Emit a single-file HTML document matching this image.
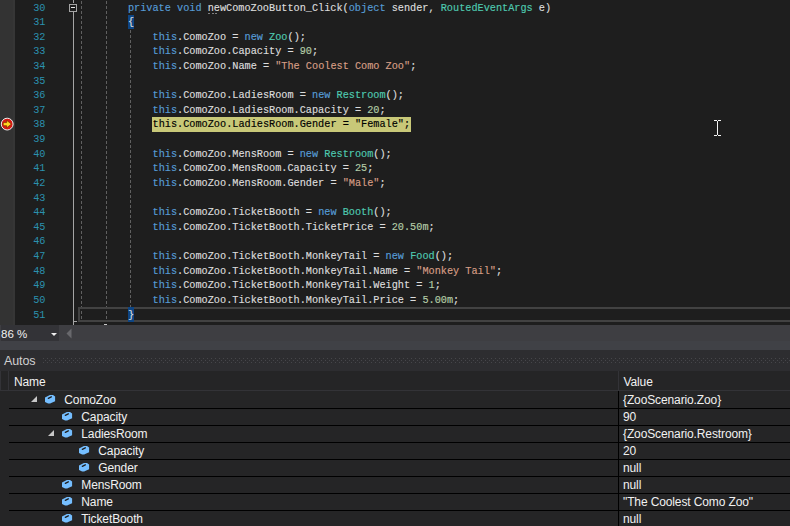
<!DOCTYPE html>
<html><head><meta charset="utf-8">
<style>
*{margin:0;padding:0;box-sizing:border-box}
html,body{width:790px;height:526px;overflow:hidden;background:#1e1e1e}
body{position:relative;font-family:"Liberation Sans",sans-serif}
.abs{position:absolute}
#editor{left:0;top:0;width:790px;height:325px;background:#1e1e1e;overflow:hidden}
#ind{left:0;top:0;width:15px;height:325px;background:#333333}
.ln{position:absolute;left:14.5px;width:31px;text-align:right;font-family:"Liberation Mono",monospace;font-size:10.23px;color:#2b91af;height:14.62px;line-height:14.62px;white-space:pre}
.cl{position:absolute;left:0;-webkit-text-stroke:0.15px currentColor;font-family:"Liberation Mono",monospace;font-size:10.23px;color:#dcdcdc;height:14.62px;line-height:14.62px;white-space:pre}
.k{color:#569cd6}.t{color:#4ec9b0}.s{color:#d69d85}.n{color:#b5cea8}
.cur{color:#000}
.box{position:absolute}
#bar{left:0;top:325px;width:790px;height:25px;background:#3e3e42}
#zoom{left:1px;top:325px;width:58px;height:16px;background:#333337;color:#f0f0f0;font-size:11.5px;line-height:18px;padding-left:0;white-space:pre}
#title{left:0;top:350px;width:790px;height:21px;background:#2d2d30}
#hdr{left:0;top:371px;width:790px;height:20px;background:#252526;border-bottom:1px solid #333337}
#rows{left:0;top:391px;width:790px;height:135px;background:#252526}
.sep{position:absolute;left:9px;width:781px;height:1px;background:#0f0f0f}
.rt{position:absolute;color:#f1f1f1;font-size:12px;line-height:17px;height:17px;white-space:pre;letter-spacing:-0.12px}
</style></head><body>
<div id="editor" class="abs">
  <div id="ind" class="abs"></div>
  <div class="abs" style="left:13px;top:0;width:2px;height:325px;background:#363636"></div>
  <div class="box" style="left:152px;top:116.96px;width:259px;height:14.62px;background:#c8c878"></div>
  <svg class="abs" style="left:0;top:0" width="790" height="325">
    <circle cx="7.2" cy="124.1" r="5.9" fill="#d81a14" stroke="#eeeeee" stroke-width="1"/>
    <path d="M3.2 122.6H6.6V120.3L11.4 124.1L6.6 127.9V125.7H3.2Z" fill="#ffd820" stroke="#6a1000" stroke-width="0.6"/>
    <rect x="73" y="0" width="1" height="3" fill="#a5a5a5"/>
    <rect x="73" y="12" width="1" height="313" fill="#a5a5a5"/>
    <rect x="73" y="321" width="4" height="1" fill="#a5a5a5"/>
    <rect x="69.5" y="4.5" width="7" height="7" fill="#1e1e1e" stroke="#a5a5a5" stroke-width="1"/>
    <rect x="71" y="7" width="4" height="1" fill="#e8e8e8"/>
    <line x1="81.5" y1="1" x2="81.5" y2="322" stroke="#606060" stroke-width="1" stroke-dasharray="3 2"/>
    <line x1="106.5" y1="1" x2="106.5" y2="322" stroke="#606060" stroke-width="1" stroke-dasharray="3 2"/>
    <line x1="130.5" y1="30" x2="130.5" y2="308" stroke="#606060" stroke-width="1" stroke-dasharray="3 2"/>
    <rect x="79" y="308" width="720" height="13" fill="none" stroke="#424242" stroke-width="2"/>
    <rect x="104" y="324" width="3" height="1" fill="#c8c8c8"/>
    <rect x="208" y="13" width="2" height="1" fill="#808080"/>
    <rect x="212" y="13" width="2" height="1" fill="#808080"/>
    <rect x="215" y="13" width="2" height="1" fill="#808080"/>
    <g fill="#f4f4f4">
      <rect x="714" y="120" width="3" height="1"/><rect x="718" y="120" width="3" height="1"/>
      <rect x="717" y="121" width="1" height="14"/>
      <rect x="714" y="135" width="3" height="1"/><rect x="718" y="135" width="3" height="1"/>
    </g>
  </svg>
  <div class="box" style="left:128px;top:14.62px;width:6.14px;height:14.62px;background:#0e4583"></div>
  <div class="box" style="left:128px;top:307.02px;width:6.14px;height:14.62px;background:#0e4583"></div>
  <div class="ln" style="top:0.50px">30</div>
<div class="ln" style="top:15.12px">31</div>
<div class="ln" style="top:29.74px">32</div>
<div class="ln" style="top:44.36px">33</div>
<div class="ln" style="top:58.98px">34</div>
<div class="ln" style="top:73.60px">35</div>
<div class="ln" style="top:88.22px">36</div>
<div class="ln" style="top:102.84px">37</div>
<div class="ln" style="top:117.46px">38</div>
<div class="ln" style="top:132.08px">39</div>
<div class="ln" style="top:146.70px">40</div>
<div class="ln" style="top:161.32px">41</div>
<div class="ln" style="top:175.94px">42</div>
<div class="ln" style="top:190.56px">43</div>
<div class="ln" style="top:205.18px">44</div>
<div class="ln" style="top:219.80px">45</div>
<div class="ln" style="top:234.42px">46</div>
<div class="ln" style="top:249.04px">47</div>
<div class="ln" style="top:263.66px">48</div>
<div class="ln" style="top:278.28px">49</div>
<div class="ln" style="top:292.90px">50</div>
<div class="ln" style="top:307.52px">51</div>
  <div class="cl" style="top:0.50px;left:127.94px"><span class="k">private</span> <span class="k">void</span> newComoZooButton_Click(<span class="k">object</span> sender, <span class="t">RoutedEventArgs</span> e)</div>
<div class="cl" style="top:15.12px;left:127.94px"><span class="br">{</span></div>
<div class="cl" style="top:29.74px;left:152.56px"><span class="k">this</span>.ComoZoo = <span class="k">new</span> <span class="t">Zoo</span>();</div>
<div class="cl" style="top:44.36px;left:152.56px"><span class="k">this</span>.ComoZoo.Capacity = <span class="n">90</span>;</div>
<div class="cl" style="top:58.98px;left:152.56px"><span class="k">this</span>.ComoZoo.Name = <span class="s">&quot;The Coolest Como Zoo&quot;</span>;</div>
<div class="cl" style="top:88.22px;left:152.56px"><span class="k">this</span>.ComoZoo.LadiesRoom = <span class="k">new</span> <span class="t">Restroom</span>();</div>
<div class="cl" style="top:102.84px;left:152.56px"><span class="k">this</span>.ComoZoo.LadiesRoom.Capacity = <span class="n">20</span>;</div>
<div class="cl" style="top:117.46px;left:152.56px"><span class="cur">this.ComoZoo.LadiesRoom.Gender = &quot;Female&quot;;</span></div>
<div class="cl" style="top:146.70px;left:152.56px"><span class="k">this</span>.ComoZoo.MensRoom = <span class="k">new</span> <span class="t">Restroom</span>();</div>
<div class="cl" style="top:161.32px;left:152.56px"><span class="k">this</span>.ComoZoo.MensRoom.Capacity = <span class="n">25</span>;</div>
<div class="cl" style="top:175.94px;left:152.56px"><span class="k">this</span>.ComoZoo.MensRoom.Gender = <span class="s">&quot;Male&quot;</span>;</div>
<div class="cl" style="top:205.18px;left:152.56px"><span class="k">this</span>.ComoZoo.TicketBooth = <span class="k">new</span> <span class="t">Booth</span>();</div>
<div class="cl" style="top:219.80px;left:152.56px"><span class="k">this</span>.ComoZoo.TicketBooth.TicketPrice = <span class="n">20.50m</span>;</div>
<div class="cl" style="top:249.04px;left:152.56px"><span class="k">this</span>.ComoZoo.TicketBooth.MonkeyTail = <span class="k">new</span> <span class="t">Food</span>();</div>
<div class="cl" style="top:263.66px;left:152.56px"><span class="k">this</span>.ComoZoo.TicketBooth.MonkeyTail.Name = <span class="s">&quot;Monkey Tail&quot;</span>;</div>
<div class="cl" style="top:278.28px;left:152.56px"><span class="k">this</span>.ComoZoo.TicketBooth.MonkeyTail.Weight = <span class="n">1</span>;</div>
<div class="cl" style="top:292.90px;left:152.56px"><span class="k">this</span>.ComoZoo.TicketBooth.MonkeyTail.Price = <span class="n">5.00m</span>;</div>
<div class="cl" style="top:307.52px;left:127.94px"><span class="br">}</span></div>
</div>
<div id="bar" class="abs"></div>
<div class="abs" style="left:0;top:341px;width:790px;height:9px;background:#404146"></div>
<div id="zoom" class="abs">86 %</div>
<svg class="abs" style="left:0;top:325px" width="790" height="25">
  <path d="M51 8h6l-3 3z" fill="#f0f0f0"/>
  <path d="M71.5 3.5v10l-5 -5z" fill="#68686c"/>
</svg>
<div id="title" class="abs"></div>
<svg class="abs" style="left:0;top:350px" width="790" height="21">
  <defs><pattern id="grip" x="43" y="8" width="4" height="4" patternUnits="userSpaceOnUse">
    <rect x="0" y="0" width="1" height="1" fill="#46464a"/><rect x="2" y="2" width="1" height="1" fill="#46464a"/>
  </pattern></defs>
  <rect x="43" y="8" width="747" height="5" fill="url(#grip)"/>
</svg>
<div class="abs rt" style="left:4px;top:353px;font-size:12.5px;color:#d0d0d0">Autos</div>
<div id="hdr" class="abs"></div>
<div id="rows" class="abs"></div>
<div class="abs" style="left:0;top:371px;width:1px;height:20px;background:#333337"></div>
<div class="abs" style="left:8px;top:371px;width:1px;height:20px;background:#333337"></div>
<div class="abs" style="left:618px;top:371px;width:1px;height:20px;background:#333337"></div>
<div class="abs rt" style="left:14px;top:374px">Name</div>
<div class="abs rt" style="left:623.5px;top:374px">Value</div>
<div class="abs rt" style="left:64.3px;top:392px">ComoZoo</div>
<div class="abs rt" style="left:623px;top:392px">{ZooScenario.Zoo}</div>
<div class="abs rt" style="left:81.3px;top:409px">Capacity</div>
<div class="abs rt" style="left:623px;top:409px">90</div>
<div class="abs rt" style="left:81.3px;top:426px">LadiesRoom</div>
<div class="abs rt" style="left:623px;top:426px">{ZooScenario.Restroom}</div>
<div class="abs rt" style="left:98.3px;top:443px">Capacity</div>
<div class="abs rt" style="left:623px;top:443px">20</div>
<div class="abs rt" style="left:98.3px;top:460px">Gender</div>
<div class="abs rt" style="left:623px;top:460px">null</div>
<div class="abs rt" style="left:81.3px;top:477px">MensRoom</div>
<div class="abs rt" style="left:623px;top:477px">null</div>
<div class="abs rt" style="left:81.3px;top:494px">Name</div>
<div class="abs rt" style="left:623px;top:494px">&quot;The Coolest Como Zoo&quot;</div>
<div class="abs rt" style="left:81.3px;top:511px">TicketBooth</div>
<div class="abs rt" style="left:623px;top:511px">null</div>
<svg class="abs" style="left:0;top:0" width="790" height="526">
<path d="M37 396v6h-6z" fill="#c8c8c8"/>
<path d="M45 397.4L49.9 395h3.1l2.1 1.6v4.6l-5 2.4h-2l-3.1-1.6z" fill="#75beff"/>
<path d="M48.3 398.3l3-1.5" stroke="#1e1e1e" stroke-width="1.3" stroke-linecap="round"/>
<rect x="9" y="408" width="781" height="1" fill="#000"/>
<path d="M62 414.4L66.9 412h3.1l2.1 1.6v4.6l-5 2.4h-2l-3.1-1.6z" fill="#75beff"/>
<path d="M65.3 415.3l3-1.5" stroke="#1e1e1e" stroke-width="1.3" stroke-linecap="round"/>
<rect x="9" y="425" width="781" height="1" fill="#000"/>
<path d="M54 430v6h-6z" fill="#c8c8c8"/>
<path d="M62 431.4L66.9 429h3.1l2.1 1.6v4.6l-5 2.4h-2l-3.1-1.6z" fill="#75beff"/>
<path d="M65.3 432.3l3-1.5" stroke="#1e1e1e" stroke-width="1.3" stroke-linecap="round"/>
<rect x="9" y="442" width="781" height="1" fill="#000"/>
<path d="M79 448.4L83.9 446h3.1l2.1 1.6v4.6l-5 2.4h-2l-3.1-1.6z" fill="#75beff"/>
<path d="M82.3 449.3l3-1.5" stroke="#1e1e1e" stroke-width="1.3" stroke-linecap="round"/>
<rect x="9" y="459" width="781" height="1" fill="#000"/>
<path d="M79 465.4L83.9 463h3.1l2.1 1.6v4.6l-5 2.4h-2l-3.1-1.6z" fill="#75beff"/>
<path d="M82.3 466.3l3-1.5" stroke="#1e1e1e" stroke-width="1.3" stroke-linecap="round"/>
<rect x="9" y="476" width="781" height="1" fill="#000"/>
<path d="M62 482.4L66.9 480h3.1l2.1 1.6v4.6l-5 2.4h-2l-3.1-1.6z" fill="#75beff"/>
<path d="M65.3 483.3l3-1.5" stroke="#1e1e1e" stroke-width="1.3" stroke-linecap="round"/>
<rect x="9" y="493" width="781" height="1" fill="#000"/>
<path d="M62 499.4L66.9 497h3.1l2.1 1.6v4.6l-5 2.4h-2l-3.1-1.6z" fill="#75beff"/>
<path d="M65.3 500.3l3-1.5" stroke="#1e1e1e" stroke-width="1.3" stroke-linecap="round"/>
<rect x="9" y="510" width="781" height="1" fill="#000"/>
<path d="M62 516.4L66.9 514h3.1l2.1 1.6v4.6l-5 2.4h-2l-3.1-1.6z" fill="#75beff"/>
<path d="M65.3 517.3l3-1.5" stroke="#1e1e1e" stroke-width="1.3" stroke-linecap="round"/>
<rect x="9" y="527" width="781" height="1" fill="#000"/>
<rect x="618" y="391" width="1" height="135" fill="#000"/>
</svg>
</body></html>
